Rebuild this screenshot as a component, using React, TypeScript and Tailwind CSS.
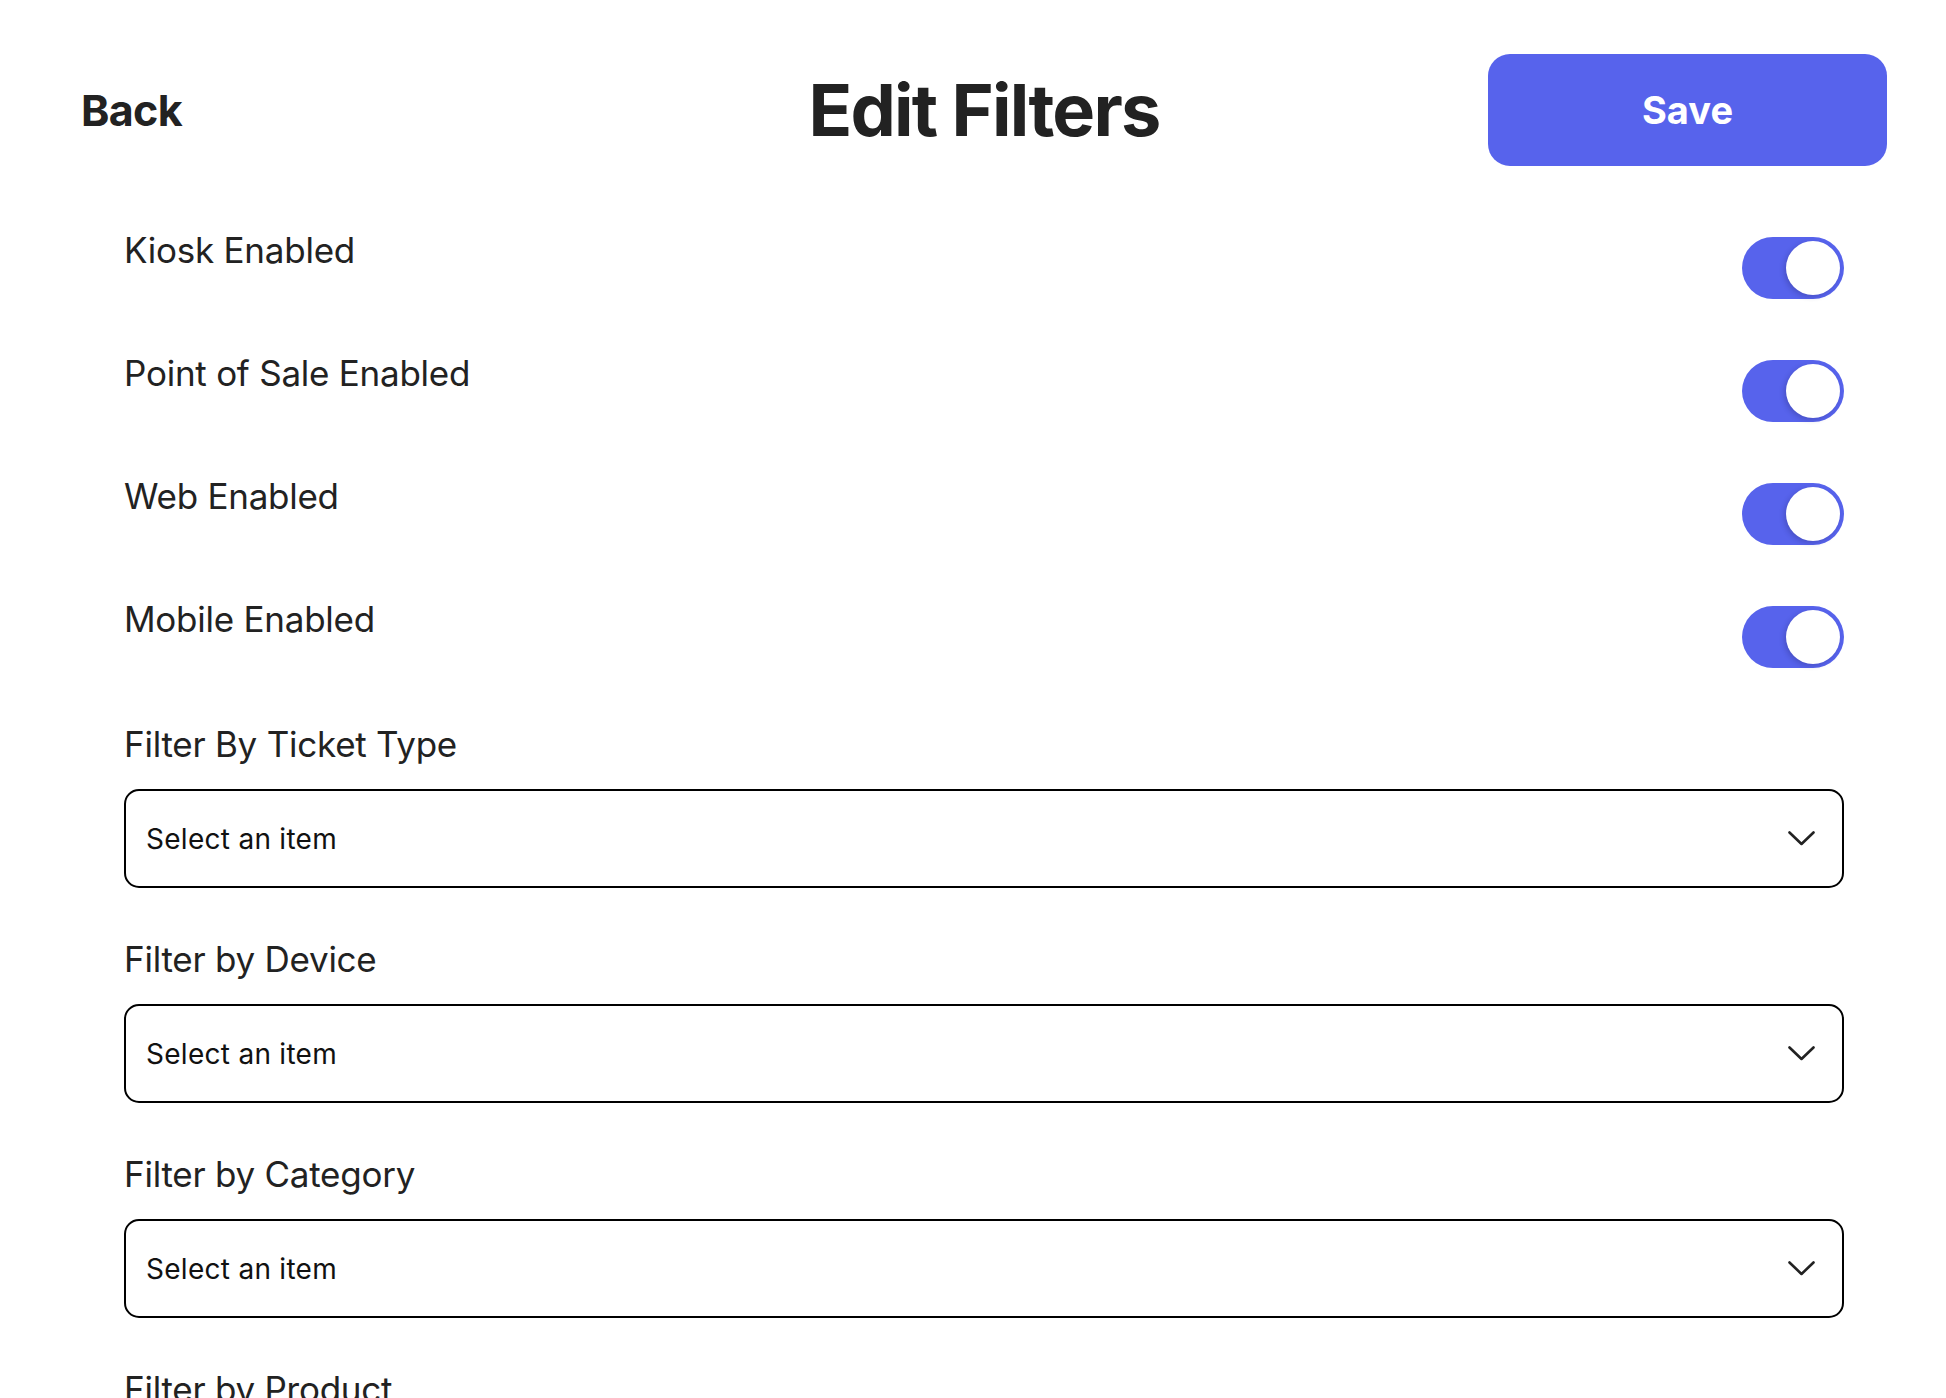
import React from "react";

function Toggle() {
  return (
    <div className="relative mt-[4px] h-[62px] w-[102px] shrink-0 rounded-full bg-[#5763ec]">
      <div className="absolute right-[4px] top-[4px] h-[54px] w-[54px] rounded-full bg-white shadow-[-2px_2px_5px_rgba(30,30,90,0.25)]" />
    </div>
  );
}

function Chevron() {
  return (
    <svg width="27" height="15" viewBox="0 0 27 15" fill="none" className="shrink-0">
      <polyline points="1.5,1.5 13.5,13 25.5,1.5" stroke="#222222" strokeWidth="2.6" strokeLinecap="round" strokeLinejoin="round" />
    </svg>
  );
}

function SelectBox() {
  return (
    <div className="flex h-[99px] items-center justify-between rounded-[15px] border-2 border-black pl-[20px] pr-[27px]">
      <span className="text-[28px] leading-none tracking-[0.01em] text-[#111]">Select an item</span>
      <Chevron />
    </div>
  );
}

const toggles = ["Kiosk Enabled", "Point of Sale Enabled", "Web Enabled", "Mobile Enabled"];
const filters = ["Filter By Ticket Type", "Filter by Device", "Filter by Category", "Filter by Product"];

export default function App() {
  return (
    <div className="min-h-screen w-full overflow-hidden bg-white text-[#222222]" style={{ fontFamily: "Inter, 'Noto Sans', sans-serif" }}>
      <header className="grid grid-cols-[1fr_auto_1fr] items-center pl-[81px] pr-[59px] pt-[54px]">
        <div className="justify-self-start text-[43px] font-bold leading-none tracking-[-0.015em]">Back</div>
        <h1 className="text-[72px] font-bold leading-none tracking-[-0.025em]">Edit Filters</h1>
        <button className="flex h-[112px] w-[399px] items-center justify-center justify-self-end rounded-[22px] bg-[#5763ec] text-[38px] font-bold text-white">
          Save
        </button>
      </header>

      <main className="mt-[67px] flex flex-col pl-[124px] pr-[102px]">
        {toggles.map((t) => (
          <div key={t} className="flex h-[123px] items-start justify-between">
            <span className="text-[35px] leading-none tracking-[-0.007em]">{t}</span>
            <Toggle />
          </div>
        ))}

        <div className="mt-[2px] flex flex-col">
          {filters.map((f) => (
            <div key={f} className="flex flex-col pb-[54px]">
              <span className="text-[35px] leading-none tracking-[-0.007em]">{f}</span>
              <div className="mt-[27px]">
                <SelectBox />
              </div>
            </div>
          ))}
        </div>
      </main>
    </div>
  );
}
